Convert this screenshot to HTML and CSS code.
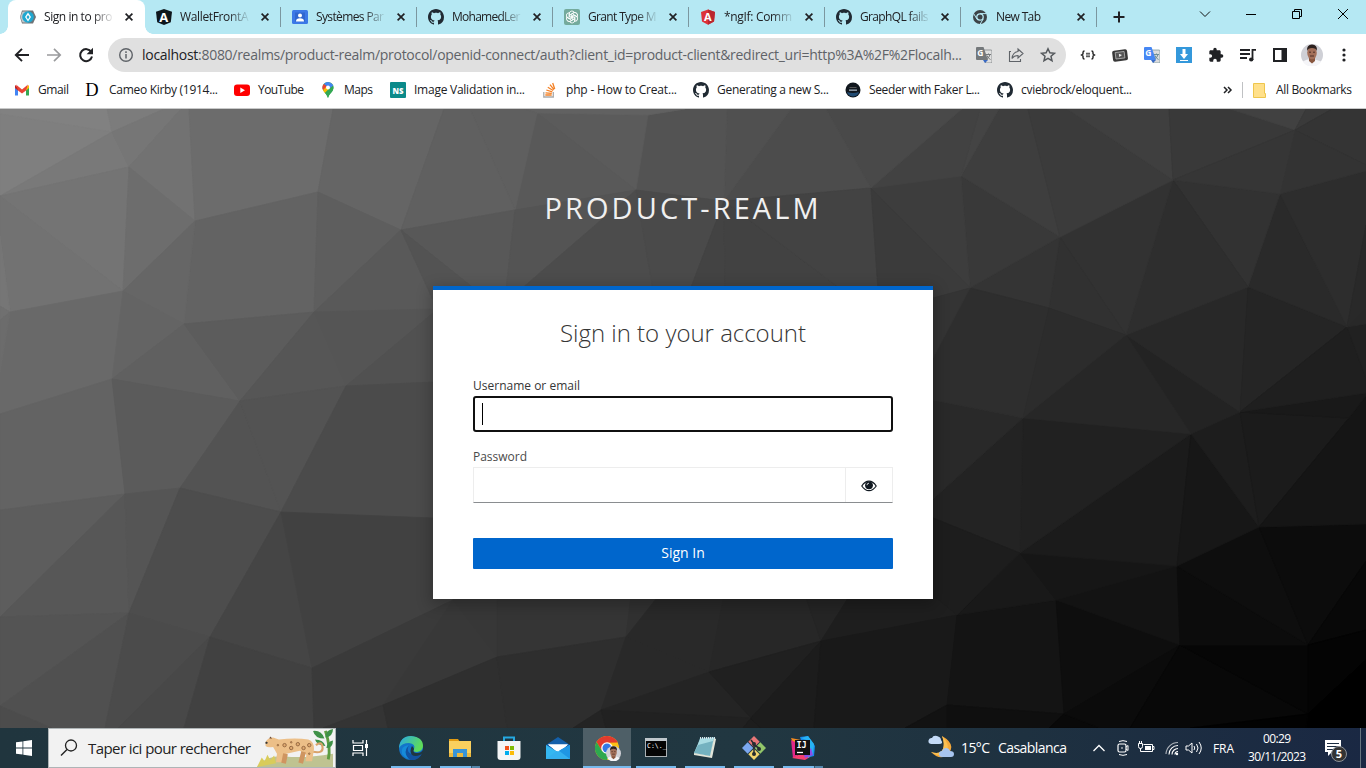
FILE: index.html
```html
<!DOCTYPE html>
<html lang="fr">
<head>
<meta charset="utf-8">
<title>Sign in to product-realm</title>
<link rel="stylesheet" href="styles.css">
</head>
<body>
<svg class="defs" width="0" height="0">
  <defs>
    <symbol id="github" viewBox="0 0 16 16"><path fill="#202a33" d="M8 0C3.58 0 0 3.58 0 8c0 3.54 2.29 6.53 5.47 7.59.4.07.55-.17.55-.38 0-.19-.01-.82-.01-1.49-2.01.37-2.53-.49-2.69-.94-.09-.23-.48-.94-.82-1.13-.28-.15-.68-.52-.01-.53.63-.01 1.08.58 1.23.82.72 1.21 1.87.87 2.33.66.07-.52.28-.87.51-1.07-1.78-.2-3.64-.89-3.64-3.95 0-.87.31-1.59.82-2.15-.08-.2-.36-1.02.08-2.12 0 0 .67-.21 2.2.82.64-.18 1.32-.27 2-.27s1.36.09 2 .27c1.53-1.04 2.2-.82 2.2-.82.44 1.1.16 1.92.08 2.12.51.56.82 1.27.82 2.15 0 3.07-1.87 3.75-3.65 3.95.29.25.54.73.54 1.48 0 1.07-.01 1.93-.01 2.2 0 .21.15.46.55.38A8.01 8.01 0 0 0 16 8c0-4.42-3.58-8-8-8z"/></symbol>
    <symbol id="close" viewBox="0 0 8 8"><path d="M.6.6l6.800 6.800M7.400.600L.600 7.400" stroke="#202124" stroke-width="1.700"/></symbol>
    <symbol id="face" viewBox="0 0 22 22"><circle cx="11" cy="11" r="11" fill="#cfd0d6"/><path d="M1.800 17.500Q6 14.500 11 15t9.200 2.500A11 11 0 0 1 1.800 17.500z" fill="#f5f5f8"/><path d="M8 13h6v4l-3 2.500L8 17z" fill="#89573f"/><ellipse cx="11" cy="8.800" rx="4.800" ry="6.500" fill="#a3705a"/><path d="M6 7Q5.500.500 11 .500T16 7q-1-3-5-3T6 7z" fill="#2c211e"/><path d="M8 8.200h2M12 8.200h2M9 12h4" stroke="#4d2f27" stroke-width="1"/></symbol>
    <symbol id="translate" viewBox="0 0 16 16"><path d="M7 3h8a1 1 0 0 1 1 1v11a1 1 0 0 1-1 1H9.500z" class="tr-back"/><path d="M1 0h6.500L12 13H1a1 1 0 0 1-1-1V1a1 1 0 0 1 1-1z" class="tr-front"/><path d="M7 13h5l-3 3z" class="tr-fold"/><text x="1.200" y="9.300" font-size="8.500" font-weight="700" class="tr-g">G</text><path d="M10 7.500h5M12.500 6.500v1M14 7.500q-.5 3-3.500 4.500M11 8.500q1 3 3.500 4" fill="none" class="tr-mark"/></symbol>
    <path id="link" d="M5.200 8.600V4.800a2.800 2.800 0 0 1 5.200-1.400L7.200 5.300v3.500"/>
  </defs>
</svg>

<header class="browser">
  <div class="tabstrip">
    <div class="tab active">
      <svg class="fav" viewBox="0 0 16 16"><path d="M2 1.500h11l3 6.500-3 6.500H2L0 8z" fill="#6f7376"/><path d="M2.500 2.500H8v11H2.500L.300 8z" fill="#c4c7c9"/><circle cx="8" cy="8" r="5.800" fill="#20a8d1"/><path d="M8 3.500L11 8l-3 4.500L5 8z" fill="#fff"/><path d="M8 6l1.500 2L8 10.500 6.500 8z" fill="#20a8d1"/></svg>
      <span class="title"><span data-w="68.500">Sign in to pro</span></span><svg class="x"><use href="#close"/></svg>
    </div>
    <div class="tab">
      <svg class="fav" viewBox="0 0 16 16"><path d="M8 0l8 2.800-1.200 10.400L8 16l-6.800-2.800L0 2.800z" fill="#0e161c"/><text x="3.300" y="12.500" font-size="13" font-weight="700" fill="#fff">A</text></svg>
      <span class="title"><span data-w="68.500">WalletFrontA</span></span><svg class="x"><use href="#close"/></svg>
    </div>
    <div class="tab">
      <svg class="fav" viewBox="0 0 16 16"><rect y="1" width="16" height="14" rx="1.500" fill="#3b78e7"/><rect x="3" y="3.500" width="10" height="9" fill="#2f66cf"/><circle cx="8" cy="6.400" r="2" fill="#fff"/><path d="M4 12.500q0-3.300 4-3.300t4 3.300z" fill="#fff"/></svg>
      <span class="title"><span data-w="68">Systèmes Par</span></span><svg class="x"><use href="#close"/></svg>
    </div>
    <div class="tab">
      <svg class="fav"><use href="#github"/></svg>
      <span class="title"><span data-w="68.500">MohamedLer</span></span><svg class="x"><use href="#close"/></svg>
    </div>
    <div class="tab">
      <svg class="fav" viewBox="0 0 16 16"><rect width="16" height="16" rx="2" fill="#74aa9c"/><g fill="none" stroke="#fff" stroke-width=".9"><use href="#link"/><use href="#link" transform="rotate(60 8 8)"/><use href="#link" transform="rotate(120 8 8)"/><use href="#link" transform="rotate(180 8 8)"/><use href="#link" transform="rotate(240 8 8)"/><use href="#link" transform="rotate(300 8 8)"/></g></svg>
      <span class="title"><span data-w="68.500">Grant Type M</span></span><svg class="x"><use href="#close"/></svg>
    </div>
    <div class="tab">
      <svg class="fav" viewBox="0 0 16 16"><path d="M8 .5L15 3l-1 9.500-6 3.300-6-3.300L1 3z" fill="#dd3138"/><path d="M8 .5L15 3l-1 9.500-6 3.300z" fill="#b9272f"/><text x="4" y="11.500" font-size="11" font-weight="700" fill="#fff">A</text></svg>
      <span class="title"><span data-w="68">*ngIf: Comm</span></span><svg class="x"><use href="#close"/></svg>
    </div>
    <div class="tab">
      <svg class="fav"><use href="#github"/></svg>
      <span class="title"><span data-w="68.500">GraphQL fails</span></span><svg class="x"><use href="#close"/></svg>
    </div>
    <div class="tab">
      <svg class="fav" viewBox="0 0 16 16"><circle cx="8" cy="8" r="7" fill="#3c4347"/><circle cx="8" cy="8" r="3.200" fill="#3c4347" stroke="#b7e8f3" stroke-width="1.300"/><path d="M8 4.600h6.500M4.900 10L1.600 4.500M11.200 10L8 15.300" stroke="#b7e8f3" stroke-width="1"/></svg>
      <span class="title"><span data-w="45">New Tab</span></span><svg class="x"><use href="#close"/></svg>
    </div>
    <svg class="newtab" viewBox="0 0 12 12"><path d="M6 .5v11M.5 6h11" stroke="#202124" stroke-width="2"/></svg>
    <div class="wincontrols">
      <svg viewBox="0 0 12 12"><path d="M1 3.500l5 5 5-5" fill="none" stroke="#111"/></svg>
      <svg viewBox="0 0 12 12"><path d="M1 6.500h10" stroke="#000"/></svg>
      <svg viewBox="0 0 12 12"><path d="M1.500 3.500h7v7h-7zM3.500 3.500v-2h7v7h-2" fill="none" stroke="#000"/></svg>
      <svg viewBox="0 0 12 12"><path d="M1 1l10 10M11 1L1 11" stroke="#000"/></svg>
    </div>
  </div>

  <div class="toolbar">
    <svg class="nav" viewBox="0 0 16 16"><path d="M15 8H2M8 1.800L1.800 8 8 14.200" fill="none" stroke="#202124" stroke-width="1.900"/></svg>
    <svg class="nav" viewBox="0 0 16 16"><path d="M1 8h13M8 1.800L14.200 8 8 14.200" fill="none" stroke="#9a9b9d" stroke-width="1.700"/></svg>
    <svg class="nav" viewBox="0 0 16 16"><path d="M13.300 5A6 6 0 1 0 14 9.500" fill="none" stroke="#202124" stroke-width="2"/><path d="M15 .8v6.400H8.600z" fill="#202124"/></svg>
    <div class="omnibox">
      <svg class="info" viewBox="0 0 16 16"><circle cx="8" cy="8" r="6.300" fill="none" stroke="#5f6368" stroke-width="1.400"/><path d="M8 7v4.500M8 4.300V6" stroke="#5f6368" stroke-width="1.500"/></svg>
      <span class="url"><span data-w="820"><b>localhost</b>:8080/realms/product-realm/protocol/openid-connect/auth?client_id=product-client&amp;redirect_uri=http%3A%2F%2Flocalh...</span></span>
      <svg class="tr gray" viewBox="0 0 16 16"><use href="#translate"/></svg>
      <svg class="act" viewBox="0 0 16 16"><path d="M3 4.500H1.500v10h11V12" fill="none" stroke="#5f6368" stroke-width="1.100"/><path d="M10 2l5 4.500L10 11V8.500q-4 0-6 3 .5-6 6-7z" fill="none" stroke="#5f6368" stroke-width="1.100"/></svg>
      <svg class="act" viewBox="0 0 16 16"><path d="M8 1.800l1.900 4 4.500.5-3.400 3 1 4.400L8 11.400l-4 2.300 1-4.400-3.400-3 4.500-.5z" fill="none" stroke="#55595d" stroke-width="1.500"/></svg>
    </div>
    <div class="exts">
      <svg viewBox="0 0 16 16"><path d="M4.500 4Q3 4 3 5.500V7L1.500 8 3 9v1.500Q3 12 4.500 12M11.500 4Q13 4 13 5.500V7l1.500 1L13 9v1.500q0 1.500-1.500 1.500" fill="none" stroke="#222" stroke-width="1.400"/><path d="M6 6.300h4M6 9.700h4M6 8h4" stroke="#222" stroke-width=".9"/></svg>
      <svg viewBox="0 0 16 16"><g transform="rotate(-7 8 8)"><rect x=".5" y="3" width="15" height="11" rx="2" fill="#383838"/><rect x="3.500" y="5" width="9" height="6.500" fill="#555" stroke="#b5b5b5" stroke-width=".8"/><path d="M7 6.500l3 1.700L7 10z" fill="#eee"/></g></svg>
      <svg class="tr blue" viewBox="0 0 16 16"><use href="#translate"/></svg>
      <svg viewBox="0 0 16 16"><rect width="16" height="16" fill="#3498db"/><path d="M6.500 2h3v5h2.500l-4 5-4-5h2.500zM4 13h8v1H4z" fill="#fff"/></svg>
      <svg viewBox="0 0 24 24"><path fill="#202124" d="M20.500 11H19V7c0-1.100-.9-2-2-2h-4V3.500a2.500 2.500 0 0 0-5 0V5H4c-1.100 0-2 .9-2 2v3.800h1.500a2.700 2.700 0 0 1 0 5.400H2V20c0 1.100.9 2 2 2h3.800v-1.500a2.700 2.700 0 0 1 5.400 0V22H17c1.100 0 2-.9 2-2v-4h1.500a2.500 2.500 0 0 0 0-5z"/></svg>
      <svg viewBox="0 0 16 16"><path d="M0 3h10M0 7h10M0 11h7M12.500 13V2.800H16" fill="none" stroke="#202124" stroke-width="1.800"/><ellipse cx="11.200" cy="12.500" rx="2.200" ry="2" fill="#202124"/></svg>
      <svg viewBox="0 0 16 16"><path d="M1 1h14v14H1zM3 3v10h6.500V3z" fill="#202124" fill-rule="evenodd"/></svg>
      <svg class="avatar"><use href="#face"/></svg>
      <svg viewBox="0 0 16 16"><g fill="#202124"><circle cx="8" cy="3" r="1.600"/><circle cx="8" cy="8" r="1.600"/><circle cx="8" cy="13" r="1.600"/></g></svg>
    </div>
  </div>

  <nav class="bookmarks">
    <div class="bm w31"><svg viewBox="0 0 16 16"><path d="M1 4v9.500h3V6z" fill="#4285f4"/><path d="M12 6v7.500h3V4z" fill="#34a853"/><path d="M1 3l3 2.500v3L1 6z" fill="#c5221f"/><path d="M12 5.500L15 3v3l-3 2.500z" fill="#fbbc04"/><path d="M2 2.500l6 5 6-5-2 6-4 3-4-3z" fill="#ea4335"/></svg><span data-w="31">Gmail</span></div>
    <div class="bm w109"><svg viewBox="0 0 16 16"><text x="0.200" y="14" font-size="18.500" class="serif">D</text></svg><span data-w="109">Cameo Kirby (1914...</span></div>
    <div class="bm w46"><svg viewBox="0 0 16 16"><rect y="2.500" width="16" height="11.500" rx="3" fill="#f00"/><path d="M6.300 5.500l4.700 2.700-4.700 2.700z" fill="#fff"/></svg><span data-w="46">YouTube</span></div>
    <div class="bm w30"><svg viewBox="0 0 16 16"><path d="M8 0a5.500 5.500 0 0 1 5.500 5.500C13.500 9.500 9.500 11 8 16 6.500 11 2.500 9.500 2.500 5.500A5.500 5.500 0 0 1 8 0z" fill="#34a853"/><path d="M8 0a5.500 5.500 0 0 0-4.200 2L8 5.500 10.500.8z" fill="#4285f4"/><path d="M3.800 2A5.500 5.500 0 0 0 3 8l5-3z" fill="#ea4335"/><path d="M3 8q.6 1.600 2 3l7.500-8L10.500.8z" fill="#fbbc04"/><path d="M5 11L13.200 3.500q.8 2.500-.6 5.500Q9 12.500 8 16 7 13 5 11z" fill="#34a853"/><path d="M6 4L10.500.7q2 1 2.700 2.800L10 6z" fill="#4285f4"/><circle cx="8" cy="5.500" r="2" fill="#fff"/></svg><span data-w="29">Maps</span></div>
    <div class="bm w112"><svg viewBox="0 0 16 16"><rect width="16" height="16" rx="1" fill="#0b8a8a"/><text x="2.500" y="11.500" font-size="9" font-weight="800" fill="#fff" textLength="11" lengthAdjust="spacingAndGlyphs">NS</text></svg><span data-w="111">Image Validation in...</span></div>
    <div class="bm w111"><svg viewBox="0 0 16 16"><path d="M1.800 10v5h9.500v-5" fill="none" stroke="#aaa" stroke-width="1.300"/><path d="M3.300 13h6.400M3.500 10.800l6.300.6M4.300 8l6 1.900M5.800 5.200l5.400 3.300M8 2.600l4 5M10.700 1l2 6" stroke="#f48024" stroke-width="1.300"/></svg><span data-w="111">php - How to Creat...</span></div>
    <div class="bm w112"><svg><use href="#github"/></svg><span data-w="112">Generating a new S...</span></div>
    <div class="bm w112"><svg viewBox="0 0 16 16"><circle cx="8" cy="8" r="7.500" fill="#10161d"/><path d="M2 10q6 2 12 0-1 4-6 4.500Q3 14 2 10z" fill="#204a72"/><path d="M4 7.500h8v1.300H4z" fill="#a3b0be"/><path d="M4.500 5.500h7" stroke="#555"/></svg><span data-w="111">Seeder with Faker L...</span></div>
    <div class="bm w112"><svg><use href="#github"/></svg><span data-w="111">cviebrock/eloquent...</span></div>
    <div class="bm-end">
      <svg class="more" viewBox="0 0 10 10"><path d="M1 2l3 3-3 3M5 2l3 3-3 3" fill="none" stroke="#202124" stroke-width="1.500"/></svg>
      <i class="bm-sep"></i>
      <svg class="folder" viewBox="0 0 13 15"><path d="M.5.500h11v10h1v4H.5z" fill="#ffe08a" stroke="#eec64c"/></svg>
      <span data-w="76">All Bookmarks</span>
    </div>
  </nav>
</header>

<main class="login">
  <svg class="mesh" id="mesh" viewBox="0 109 1366 619"></svg>
  <h1><span data-w="274">PRODUCT-REALM</span></h1>
  <section class="card">
    <h2><span data-w="246">Sign in to your account</span></h2>
    <label><span data-w="107">Username or email</span></label>
    <div class="field focus"><i class="caret"></i></div>
    <label class="second"><span data-w="54">Password</span></label>
    <div class="field pwd"><div class="eye"><svg viewBox="0 0 16 12"><path d="M.8 6Q4 1.200 8 1.200T15.200 6Q12 10.700 8 10.700T.8 6z" fill="#fff" stroke="#101820" stroke-width="1.200"/><circle cx="8" cy="5.300" r="3.900" fill="#101820"/><path d="M6 5.200a2 2 0 0 1 2-2" fill="none" stroke="#fff" stroke-width=".8"/></svg></div></div>
    <div class="btn"><span data-w="43.500">Sign In</span></div>
  </section>
</main>

<footer class="taskbar">
  <div class="start"><svg viewBox="0 0 16 16"><path d="M0 2.300l6.500-.9v6.200H0zM7.300 1.300L16 0v7.600H7.300zM0 8.400h6.500v6.200L0 13.700zM7.300 8.400H16V16l-8.700-1.200z" fill="#fff"/></svg></div>
  <div class="search">
    <svg class="glass" viewBox="0 0 18 18"><circle cx="11" cy="6.500" r="5.500" fill="none" stroke="#222" stroke-width="1.300"/><path d="M7 10.500L1 16.500" stroke="#222" stroke-width="1.400"/></svg>
    <span data-w="163">Taper ici pour rechercher</span>
    <svg class="leopard" viewBox="0 0 80 40">
      <path d="M0 40Q10 27 30 29t50-3v14z" fill="#bfc391"/><path d="M0 40l5-10 3 4 3-7 3 6 4-5 2 8z" fill="#d9cc5a"/><path d="M75 32Q78 20 72 2" stroke="#5d9c42" stroke-width="3" fill="none"/><path d="M71 10q-10 0-12-8 9-1 12 8zM72 9q0-8 8-9 0 8-8 9zM72 18q-9-1-11-7 9 0 11 7zM73 20q1-7 7-8 0 8-7 8z" fill="#3f9148"/>
      <path d="M59 24q11 2 10-5t-7-2" fill="none" stroke="#d9a269" stroke-width="2.200"/>
      <path d="M9 14q2-5 8-5l6 2q18-2 31 0 6 2 6 10l-2 13h-7l1-7-7-4-14 3-4 9h-7l1-9-4-7q-6 1-8-1z" fill="#ecbf88"/><path d="M30 26l-2 10M49 24l-3 12" stroke="#cf9560" stroke-width="5"/>
      <g fill="#dfaa70" stroke="#946640" stroke-width="1"><circle cx="29" cy="17" r="1.800"/><circle cx="36" cy="20" r="1.800"/><circle cx="43" cy="16" r="1.800"/><circle cx="49" cy="20" r="1.800"/><circle cx="55" cy="17" r="1.800"/><circle cx="36" cy="14" r=".8"/><circle cx="22" cy="17" r=".8"/><circle cx="55" cy="26" r=".8"/></g><path d="M13 10l1-2 2 2" fill="#6b4730"/><path d="M9 14l2 1" stroke="#333" stroke-width="2"/>
    </svg>
  </div>
  <div class="taskview"><svg viewBox="0 0 18 18"><path d="M2 1v3h10V1M2 17v-3h10v3M2.500 6.500h9v5h-9zM15.500 1v16" fill="none" stroke="#fff" stroke-width="1.200"/><rect x="14" y="5" width="3" height="4" fill="#fff"/></svg></div>
  <div class="apps">
    <div class="app open"><svg viewBox="0 0 24 24"><defs><linearGradient id="eg" x2="1" y2=".4"><stop stop-color="#28a8e8"/><stop offset="1" stop-color="#5fdc58"/></linearGradient></defs><circle cx="12" cy="12" r="12" fill="#1374ca"/><path d="M0 12Q1 0 12 0q12 1 12 10 0 5-6 6-5 0-3-3 2-5-5-6Q3 7 0 12z" fill="url(#eg)"/><path d="M10 9q-7 6 0 14-4-1-7-5Q1 10 10 9z" fill="#168bd9"/><path d="M10 9q-4 8 5 10 4 1 8-2-3 8-12 7-8-7-1-15z" fill="#1252a0"/><path d="M15 13q-2 4 3 4 4 0 6-3v3l-3 2q-5 2-8 0-3-4 0-9 2 2 2 3z" fill="#203640"/></svg></div>
    <div class="app open multi"><svg viewBox="0 0 24 24"><path d="M1 3h9l2 3H1z" fill="#e29b12"/><rect x="1" y="5" width="22" height="16" fill="#fad05e"/><path d="M1 17h22v4H1z" fill="#eab83e"/><path d="M5 21v-8h14v8h-4v-4H9v4z" fill="#3794d8"/></svg></div>
    <div class="app"><svg viewBox="0 0 24 24"><path d="M7 6V1.500h10V6" fill="none" stroke="#25a8e0" stroke-width="2"/><path d="M.5 5h23v16q0 3-3 3h-17q-3 0-3-3z" fill="#f4f5f6"/><path d="M8 10h4v4H8z" fill="#f1511b"/><path d="M13 10h4v4h-4z" fill="#80bc06"/><path d="M8 15h4v4H8z" fill="#00adef"/><path d="M13 15h4v4h-4z" fill="#fbbc09"/></svg></div>
    <div class="app"><svg viewBox="0 0 24 24"><path d="M0 9L12 1l12 8v5H0z" fill="#1460aa"/><path d="M3 9h18l-8 9z" fill="#fff"/><path d="M0 9l12 7 12-7v14H0z" fill="#35b7f1"/><path d="M2 8.500h20L12 15.500z" fill="#fff"/><path d="M24 9v14L10 15.500z" fill="#1f96e4"/><path d="M0 23l12-9 12 9z" fill="#34b0ef"/><path d="M2 8.500h20L12 15.500z" fill="#fff"/></svg></div>
    <div class="app current"><svg class="chrome" viewBox="0 0 26 26"><circle cx="12" cy="12" r="12" fill="#fbc116"/><path d="M1.600 6A12 12 0 0 1 22.400 6L12 6.500 7 15z" fill="#e33b2e"/><path d="M1.600 6A12 12 0 0 0 12 24l5-9H7z" fill="#2da94f"/><path d="M2 5.500L7 14h3L12 6.500h10.600L21 4 6 2z" fill="#e33b2e"/><circle cx="12" cy="12" r="5.800" fill="#fff"/><circle cx="12" cy="12" r="4.500" fill="#3478e5"/><svg x="11" y="10" width="15" height="15"><use href="#face"/></svg></svg></div>
    <div class="app open"><svg viewBox="0 0 24 24"><rect x="1.500" y="2.500" width="21" height="18" fill="#050505" stroke="#abb1b4"/><path d="M1 2h22v3H1z" fill="#bfc7cc"/><text x="3" y="12" font-size="6.500" class="mono" fill="#fff">C:\._</text></svg></div>
    <div class="app open"><svg viewBox="0 0 24 24"><path d="M7 2l15-1-3 19L2 18z" fill="#689eae"/><path d="M7 3l14-1-4 18L1 17z" fill="#a9dce3"/><path d="M5 9l15-4-3 15L1 17z" fill="#74b2c0"/><path d="M1 17l16 3 4-18 2 1-4 19-18-3z" fill="#e2e5d9"/><path d="M7 2h15" stroke="#d6e4e8" stroke-width="2" stroke-dasharray="1 1"/></svg></div>
    <div class="app open"><svg viewBox="0 0 24 24"><g transform="rotate(45 12 12)"><path d="M3.500 3.500h8v8h-8z" fill="#e87677"/><path d="M12.500 3.500h8v8h-8z" fill="#92c66a"/><path d="M3.500 12.500h8v8h-8z" fill="#7ba7ef"/><path d="M12.500 12.500h8v8h-8z" fill="#f2d46c"/></g><path d="M9 4l3 4v10M12 9l5 3" stroke="#252c31" stroke-width="1.500" fill="none"/><g fill="#252c31"><circle cx="12" cy="8" r="2"/><circle cx="12" cy="18" r="2"/><circle cx="17" cy="13" r="2"/></g></svg></div>
    <div class="app open multi"><svg viewBox="0 0 24 24"><path d="M0 2l10 2-5 10z" fill="#f68b20"/><path d="M9 1l8-1 7 10-1 10-8 2z" fill="#1688ec"/><path d="M0 4l6 3v13l-4 2z" fill="#e1288a"/><path d="M1 22l8-4 10 3-5 3z" fill="#f73f70"/><path d="M10 2l8 3-1 17 5-4 1-10-6-8z" fill="#28b3f4"/><path d="M14 22l8-3-2-7-7 7z" fill="#8b4de6"/><rect x="4" y="4" width="15" height="15" fill="#111"/><text x="5.500" y="11.500" font-size="8.500" class="mono bold" fill="#fff">IJ</text><path d="M6 16.500h6" stroke="#fff" stroke-width="1.300"/></svg></div>
  </div>
  <div class="tray">
    <svg class="weather" viewBox="0 0 26 24"><path d="M14 1q14 8 7 17-8 9-18-1 9 3 12-3 2-6-1-13z" fill="#f5a93a"/><path d="M14 1q8 8 5 15-5 8-16 1 9 3 12-3 2-6-1-13z" fill="#fbc052"/><path d="M3 9a3 3 0 0 1 1-6q1-3 5-2t4 4q3 4-2 4z" fill="#c3daf7"/><path d="M14 22a3 3 0 0 1 0-6q1-3 4-3t4 3q4 0 4 3t-3 3z" fill="#a7c5f0"/></svg>
    <span class="t15" data-w="29">15°C</span><span class="t15 city" data-w="69">Casablanca</span>
    <svg class="ti up" viewBox="0 0 16 16"><path d="M2.500 11L8 5.500 13.500 11" fill="none" stroke="#fff" stroke-width="1.300"/></svg>
    <svg class="ti meet" viewBox="0 0 16 16"><path d="M4 1.500q4-1.700 8 0M4 14.500q4 1.700 8 0" fill="none" stroke="#fff"/><rect x="3" y="4" width="8" height="8" rx="1.500" fill="none" stroke="#fff" stroke-width="1.200"/><path d="M11 7l2-1.500v5L11 9" fill="none" stroke="#fff"/><circle cx="7" cy="8" r=".8" fill="#fff"/></svg>
    <svg class="ti bat" viewBox="0 0 17 16"><path d="M5.500 4.500h9v7h-9M14.500 6.500H16v3h-1.500" fill="none" stroke="#fff"/><path d="M7 6h6v4H7z" fill="#fff"/><path d="M.5 3.500h4v3q0 2-2 2t-2-2zM1.500 3V1M3.500 3V1M2.500 8v3.500H6" fill="none" stroke="#fff"/></svg>
    <svg class="ti wifi" viewBox="0 0 16 16"><g fill="none" stroke="#fff" stroke-width="1.100"><path d="M2 14A12 12 0 0 1 14 2.500" opacity=".65"/><path d="M5 14.500A9 9 0 0 1 14 5.500"/><path d="M8 14.500A6 6 0 0 1 14 8.500"/><path d="M11 14.500a3 3 0 0 1 3-3"/></g><circle cx="13" cy="14" r="1.200" fill="#fff"/></svg>
    <svg class="ti snd" viewBox="0 0 18 16"><path d="M1 6h2.500L7 3v10l-3.500-3H1z" fill="none" stroke="#fff"/><path d="M9 6q1.500 2 0 4M11.500 4q3 4 0 8M14 2q4.500 6 0 12" fill="none" stroke="#fff"/></svg>
    <span class="lang" data-w="21">FRA</span>
    <div class="clock"><span data-w="28">00:29</span><span data-w="58">30/11/2023</span></div>
    <div class="notif"><svg viewBox="0 0 18 18"><path d="M1 1h16v12H8l-4 4v-4H1z" fill="#fff"/><path d="M3 4.500h12M3 7.500h12M3 10.500h6" stroke="#1c2d42" stroke-width="1"/></svg><b>5</b></div>
    <i class="peek"></i>
  </div>
</footer>
<script src="script.js"></script>
</body>
</html>
```

FILE: styles.css
```css
* { box-sizing: border-box; }
body { margin: 0; width: 1366px; height: 768px; overflow: hidden; display: flex; flex-direction: column; font-family: "Open Sans", "Noto Sans", sans-serif; font-size: 12px; color: #202124; }
svg { display: block; flex: none; }
.defs { position: absolute; }
span { white-space: nowrap; }
[data-w] { display: inline-block; }

.browser { height: 109px; background: #fff; border-bottom: 1px solid #c8c9c9; flex: none; }
.tabstrip { height: 34px; background: #b5e8f3; display: flex; padding-left: 8px; }
.tab { width: 136px; height: 34px; display: flex; align-items: center; padding-left: 12px; flex: none; position: relative; }
.tab.active { background: #fff; border-radius: 8px 8px 0 0; width: 137px; margin-right: -1px; }
.tab.active::before, .tab.active::after { content: ""; position: absolute; bottom: 0; width: 8px; height: 8px; }
.tab.active::before { left: -8px; background: radial-gradient(circle at 0 0, transparent 7.5px, #fff 8px); }
.tab.active::after { right: -8px; background: radial-gradient(circle at 100% 0, transparent 7.5px, #fff 8px); }
.tab:not(.active)::after { content: ""; position: absolute; right: -1px; top: 7px; width: 1px; height: 20px; background: #7b979f; }
.fav { width: 16px; height: 16px; }
.title { width: 69px; margin-left: 8px; height: 18px; line-height: 17px; -webkit-mask-image: linear-gradient(90deg, #000 70%, transparent 102%); mask-image: linear-gradient(90deg, #000 70%, transparent 102%); }
.x { width: 8px; height: 8px; margin-left: 12px; }
.newtab { width: 12px; height: 12px; margin: 11px 0 0 17px; }
.wincontrols { display: flex; gap: 34px; margin: 8px 0 0 74px; }
.wincontrols svg { width: 12px; height: 12px; }

.toolbar { height: 42px; display: flex; align-items: center; padding-left: 14px; }
.nav { width: 16px; height: 16px; margin-right: 16px; }
.omnibox { width: 958px; height: 34px; margin-left: -2px; border-radius: 17px; background: #e0e0e0; display: flex; align-items: center; padding-left: 10px; }
.info { width: 16px; height: 16px; }
.url { width: 834px; margin-left: 8px; font-size: 14px; line-height: 20px; color: #5f6368; }
.url b { font-weight: 400; color: #202124; }
.tr, .act { width: 16px; height: 16px; margin-right: 16px; }
.omnibox .act:last-child { margin-right: 0; }
.gray { --f: #74787b; --b: #e0e0e0; --s: #74787b; }
.blue { --f: #4687f4; --b: #dcdcdc; --s: #6f8f98; }
.tr-front { fill: var(--f); }
.tr-back { fill: var(--b); stroke: var(--s); stroke-width: .7; }
.tr-fold { fill: #3869c3; }
.gray .tr-fold { fill: var(--f); }
.tr-g { fill: #fff; }
.tr-mark { stroke: var(--s); }
.exts { display: flex; align-items: center; gap: 16px; margin-left: 14px; }
.exts svg { width: 16px; height: 16px; margin: 0; }
.exts .avatar { width: 22px; height: 22px; margin: 0 -3px; }

.bookmarks { height: 32px; display: flex; align-items: center; padding: 0 0 4px 14px; gap: 16px; line-height: 16px; }
.bm { display: flex; gap: 8px; align-items: center; flex: none; }
.bm svg { width: 16px; height: 16px; }
.w31 { width: 55px; } .w109 { width: 133px; } .w46 { width: 70px; } .w30 { width: 54px; } .w111 { width: 135px; } .w112 { width: 136px; }
.serif { font-family: "Liberation Serif", serif; }
.mono { font-family: "DejaVu Sans Mono", monospace; }
.bold { font-weight: 700; }
.bm-end { display: flex; align-items: center; margin-left: 74px; }
.more { width: 10px; height: 10px; }
.bm-sep { width: 1px; height: 16px; background: #bfc1c3; margin: 0 10px 0 9px; }
.folder { width: 13px; height: 15px; margin-right: 10px; }

.login { height: 619px; flex: none; position: relative; display: flex; flex-direction: column; align-items: center; background: linear-gradient(114deg, #808080 0%, #5a5a5a 33%, #333 57%, #171717 77%, #000 100%); font-family: "Open Sans", sans-serif; }
.mesh { position: absolute; inset: 0; width: 1366px; height: 619px; }
.mesh polygon { stroke-width: .8; stroke-linejoin: round; }
h1 { position: relative; margin: 79px 0 0; padding-right: 3px; font-size: 29px; line-height: 40px; font-weight: 400; color: #f0f0f0; height: 98px; }
.card { position: relative; width: 500px; height: 313px; background: #fff; border-top: 4px solid #06c; padding: 0 40px; box-shadow: 0 4px 14px 2px rgba(3,3,3,.24); color: #363636; }
h2 { margin: 27px 0 0; font-size: 24px; line-height: 32px; font-weight: 300; text-align: center; }
label { display: block; margin-top: 28px; height: 19px; line-height: 17px; font-size: 12px; }
label.second { margin-top: 16px; color: #4a4a4a; }
.field { height: 36px; border: 1px solid #ededed; border-bottom-color: #8a8d90; display: flex; align-items: center; }
.field.focus { border: 2px solid #101010; border-radius: 3px; }
.caret { width: 1px; height: 22px; margin-left: 7px; background: #000; }
.pwd { justify-content: flex-end; }
.eye { width: 47px; height: 34px; border-left: 1px solid #ededed; display: flex; align-items: center; justify-content: center; }
.eye svg { width: 16px; height: 12px; margin-top: 2px; }
.btn { margin-top: 35px; height: 31px; background: #06c; color: #fff; font-size: 14px; line-height: 29px; text-align: center; border-radius: 1px; }

.taskbar { height: 40px; flex: none; display: flex; background: linear-gradient(90deg, #20353e 0%, #213741 55%, #1e3140 75%, #1a2843 100%); color: #fff; }
.start { width: 48px; padding: 12px 0 0 16px; }
.start svg { width: 16px; height: 16px; }
.search { width: 288px; height: 40px; background: #f2f2f2; border: 1px solid #aeb4b6; display: flex; align-items: center; color: #222; font-size: 15px; padding-left: 11px; }
.glass { width: 18px; height: 18px; margin-right: 10px; }
.leopard { width: 80px; height: 38px; margin-left: 4px; }
.taskview { width: 51px; padding: 11px 0 0 15px; }
.taskview svg { width: 18px; height: 18px; }
.apps { display: flex; gap: 1px; }
.app { width: 48px; height: 40px; padding: 8px 0 0 12px; position: relative; }
.app svg { width: 24px; height: 24px; }
.app .chrome { width: 26px; height: 26px; }
.app .chrome svg { width: 15px; height: 15px; }
.app.open::after { content: ""; position: absolute; left: 4px; bottom: 0; width: 40px; height: 2px; background: #76b9ed; }
.app.multi::after { background: linear-gradient(90deg, #76b9ed 31px, #35566b 31px, #35566b 32px, #5486ab 32px); }
.app.current { background: #4e5f67; box-shadow: inset 0 -2px #76b9ed; }
.tray { display: flex; align-items: center; margin-left: 101px; width: 438px; font-size: 12px; }
.weather { width: 26px; height: 24px; margin: 0 7px 2px 0; }
.t15 { font-size: 14px; line-height: 20px; width: 29px; }
.t15.city { margin-left: 8px; width: 69px; }
.ti { width: 16px; height: 16px; }
.up { margin-left: 24px; }
.meet { margin-left: 8px; }
.bat { width: 17px; margin-left: 7px; }
.wifi { margin-left: 9px; }
.snd { width: 18px; margin-left: 5px; }
.lang { margin-left: 10px; width: 21px; }
.clock { width: 60px; margin-left: 13px; display: flex; flex-direction: column; align-items: center; line-height: 18px; padding-bottom: 1px; }
.notif { position: relative; width: 18px; margin-left: 17px; }
.notif svg { width: 18px; height: 18px; }
.notif b { position: absolute; left: 7px; top: 7px; width: 16px; height: 16px; border-radius: 50%; background: #333; border: 1px solid #8d9299; font-size: 11px; line-height: 14px; text-align: center; }
.peek { width: 1px; height: 40px; background: #66747f; margin-left: 18px; }
```

FILE: script.js
```js
// Low-poly backdrop: gray level (hex pair) followed by the facet's corners.
const facets = `
81 0,109 107,109 112,132 0,114
7c 107,109 164,109 112,132
7f 0,114 112,132 0,196
79 0,196 112,132 129,167
76 112,132 164,109 181,109 129,167
72 129,167 181,109 189,109 195,221
74 0,196 129,167 123,291
72 0,196 123,291 10,312 0,236
76 0,236 10,312 0,306
70 0,306 10,312 0,320
6d 129,167 195,221 123,291
6c 189,109 333,109 318,192 195,221
65 333,109 444,109 401,230 318,192
63 195,221 318,192 314,312 184,324
66 195,221 184,324 123,291
5e 318,192 401,230 314,312
69 10,312 123,291 112,379 0,414 0,372
6c 0,320 10,312 0,372
64 123,291 184,324 112,379
60 184,324 240,401 112,379
5c 184,324 314,312 240,401
56 314,312 346,386 240,401
59 401,230 433,300 433,309 314,312
55 314,312 433,309 433,313 346,386
51 346,386 433,313 433,382
63 0,414 112,379 125,494 0,510
5b 112,379 240,401 180,488 125,494
53 240,401 281,512 180,488
53 240,401 346,386 281,512
4b 346,386 433,382 433,518 281,512
5d 0,510 125,494 0,617
57 0,617 125,494 129,613
54 0,617 129,613 0,706
55 125,494 180,488 129,613
4d 180,488 281,512 210,637 129,613
45 281,512 312,668 210,637
41 281,512 433,518 453,518 453,600 312,668
50 0,706 129,613 105,728 52,728
4c 0,706 52,728 0,728
4b 129,613 210,637 118,728 105,728
48 210,637 184,728 118,728
41 210,637 312,668 314,728 184,728
3a 312,668 453,600 383,705 323,728 314,728
38 453,600 497,657 383,705
37 453,600 453,595 497,595 497,657
34 383,705 388,728 323,728
2f 383,705 497,657 507,728 388,728
35 497,595 631,595 626,637 497,657
31 631,595 659,595 626,637
2e 497,657 626,637 601,710 573,728 507,728
29 626,637 659,595 724,595 709,672
29 626,637 709,672 601,710
27 724,595 805,595 821,641 709,672
25 805,595 850,595 821,641
24 601,710 606,728 573,728
24 601,710 709,672 751,718
21 601,710 751,718 743,728 606,728
20 709,672 821,641 751,718
1d 751,718 760,728 743,728
1c 751,718 821,641 814,728 760,728
1e 850,595 933,595 957,615 821,641
19 821,641 957,615 947,705 905,728 814,728
12 947,705 947,728 905,728
14 957,615 1056,600 1064,714 947,705
0f 947,705 1064,714 1049,728 947,728
09 1064,714 1100,728 1049,728
0e 1056,600 1180,645 1064,714
13 1056,600 1177,566 1180,645
0b 1064,714 1180,645 1130,728 1100,728
08 1180,645 1308,714 1190,728 1130,728
06 1180,645 1308,645 1308,714
0c 1177,566 1308,645 1180,645
0e 1177,566 1259,527 1308,645
0c 1259,527 1366,524 1366,561 1308,645
08 1308,645 1366,561 1366,630
04 1308,645 1366,630 1366,660 1308,714
00 1308,714 1366,660 1366,728 1306,728
02 1308,714 1306,728 1190,728
19 1020,553 1056,600 957,615
16 1020,553 1177,566 1056,600
1b 1020,553 1191,434 1177,566
17 1191,434 1259,527 1177,566
21 1023,418 1191,434 1020,553
23 1023,418 1020,553 933,518 933,499
1d 933,518 1020,553 957,615 933,595
29 1023,418 933,499 933,400
1d 1191,434 1240,412 1259,527
1b 1240,412 1349,418 1259,527
15 1349,418 1366,396 1366,524 1259,527
19 1240,412 1366,393 1366,396 1349,418
23 1126,335 1240,412 1191,434
27 1126,335 1191,434 1023,418
28 1126,335 1248,287 1240,412
25 1248,287 1347,327 1240,412
1f 1347,327 1366,378 1366,393 1240,412
21 1347,327 1366,324 1366,378
28 1347,327 1366,308 1366,324
2a 1280,194 1347,327 1248,287
2d 1280,194 1366,171 1366,225 1347,327
29 1347,327 1366,225 1366,308
32 1173,180 1280,194 1248,287
2e 1173,180 1248,287 1126,335
32 1060,237 1173,180 1126,335
31 1060,237 1126,335 1049,308
34 970,288 1060,237 1049,308
2e 970,288 1049,308 1023,418 933,400 933,358
2c 1049,308 1126,335 1023,418
39 961,176 1060,237 970,288
3d 871,188 961,176 970,288
3e 961,176 999,109 1028,109 1060,237
44 961,176 980,109 999,109
42 871,188 962,109 980,109 961,176
3b 1060,237 1028,109 1067,109 1173,180
3f 1067,109 1169,109 1173,180
39 1173,180 1169,109 1230,109 1295,130
41 1230,109 1306,109 1295,130
3a 1295,130 1306,109 1332,109
34 1295,130 1332,109 1366,109 1366,165
33 1295,130 1366,165 1366,171 1280,194
36 1173,180 1295,130 1280,194
49 826,109 962,109 871,188
4c 724,201 791,109 826,109 871,188
50 724,201 727,109 791,109
53 636,190 648,115 685,109 727,109 724,201
5b 537,113 648,115 636,190
59 537,113 636,190 515,210
61 524,109 685,109 648,115 537,113
5f 470,109 524,109 537,113 515,210
60 401,230 444,109 470,109 515,210
58 401,230 515,210 506,290 476,290
53 401,230 476,290 433,300
54 515,210 636,190 520,290 506,290
4c 636,190 653,290 520,290
4a 636,190 724,201 690,290 653,290
43 724,201 725,290 690,290
42 724,201 842,290 725,290
43 724,201 871,188 878,290 842,290
3b 871,188 970,288 933,298 878,290
34 970,288 933,358 933,298`;

document.getElementById('mesh').innerHTML = facets.trim().split('\n').map(row => {
  const [g, ...points] = row.split(' ');
  const gray = '#' + g + g + g;
  return `<polygon fill="${gray}" stroke="${gray}" points="${points.join(' ')}"/>`;
}).join('');

// Track each label out to its column width.
document.querySelectorAll('[data-w]').forEach(el => {
  el.style.width = 'auto';
  const range = document.createRange();
  range.selectNodeContents(el);
  const natural = range.getBoundingClientRect().width;
  const target = Number(el.dataset.w);
  el.style.letterSpacing = (target - natural) / (el.textContent.length - 1) + 'px';
  el.style.width = target + 'px';
});
```
